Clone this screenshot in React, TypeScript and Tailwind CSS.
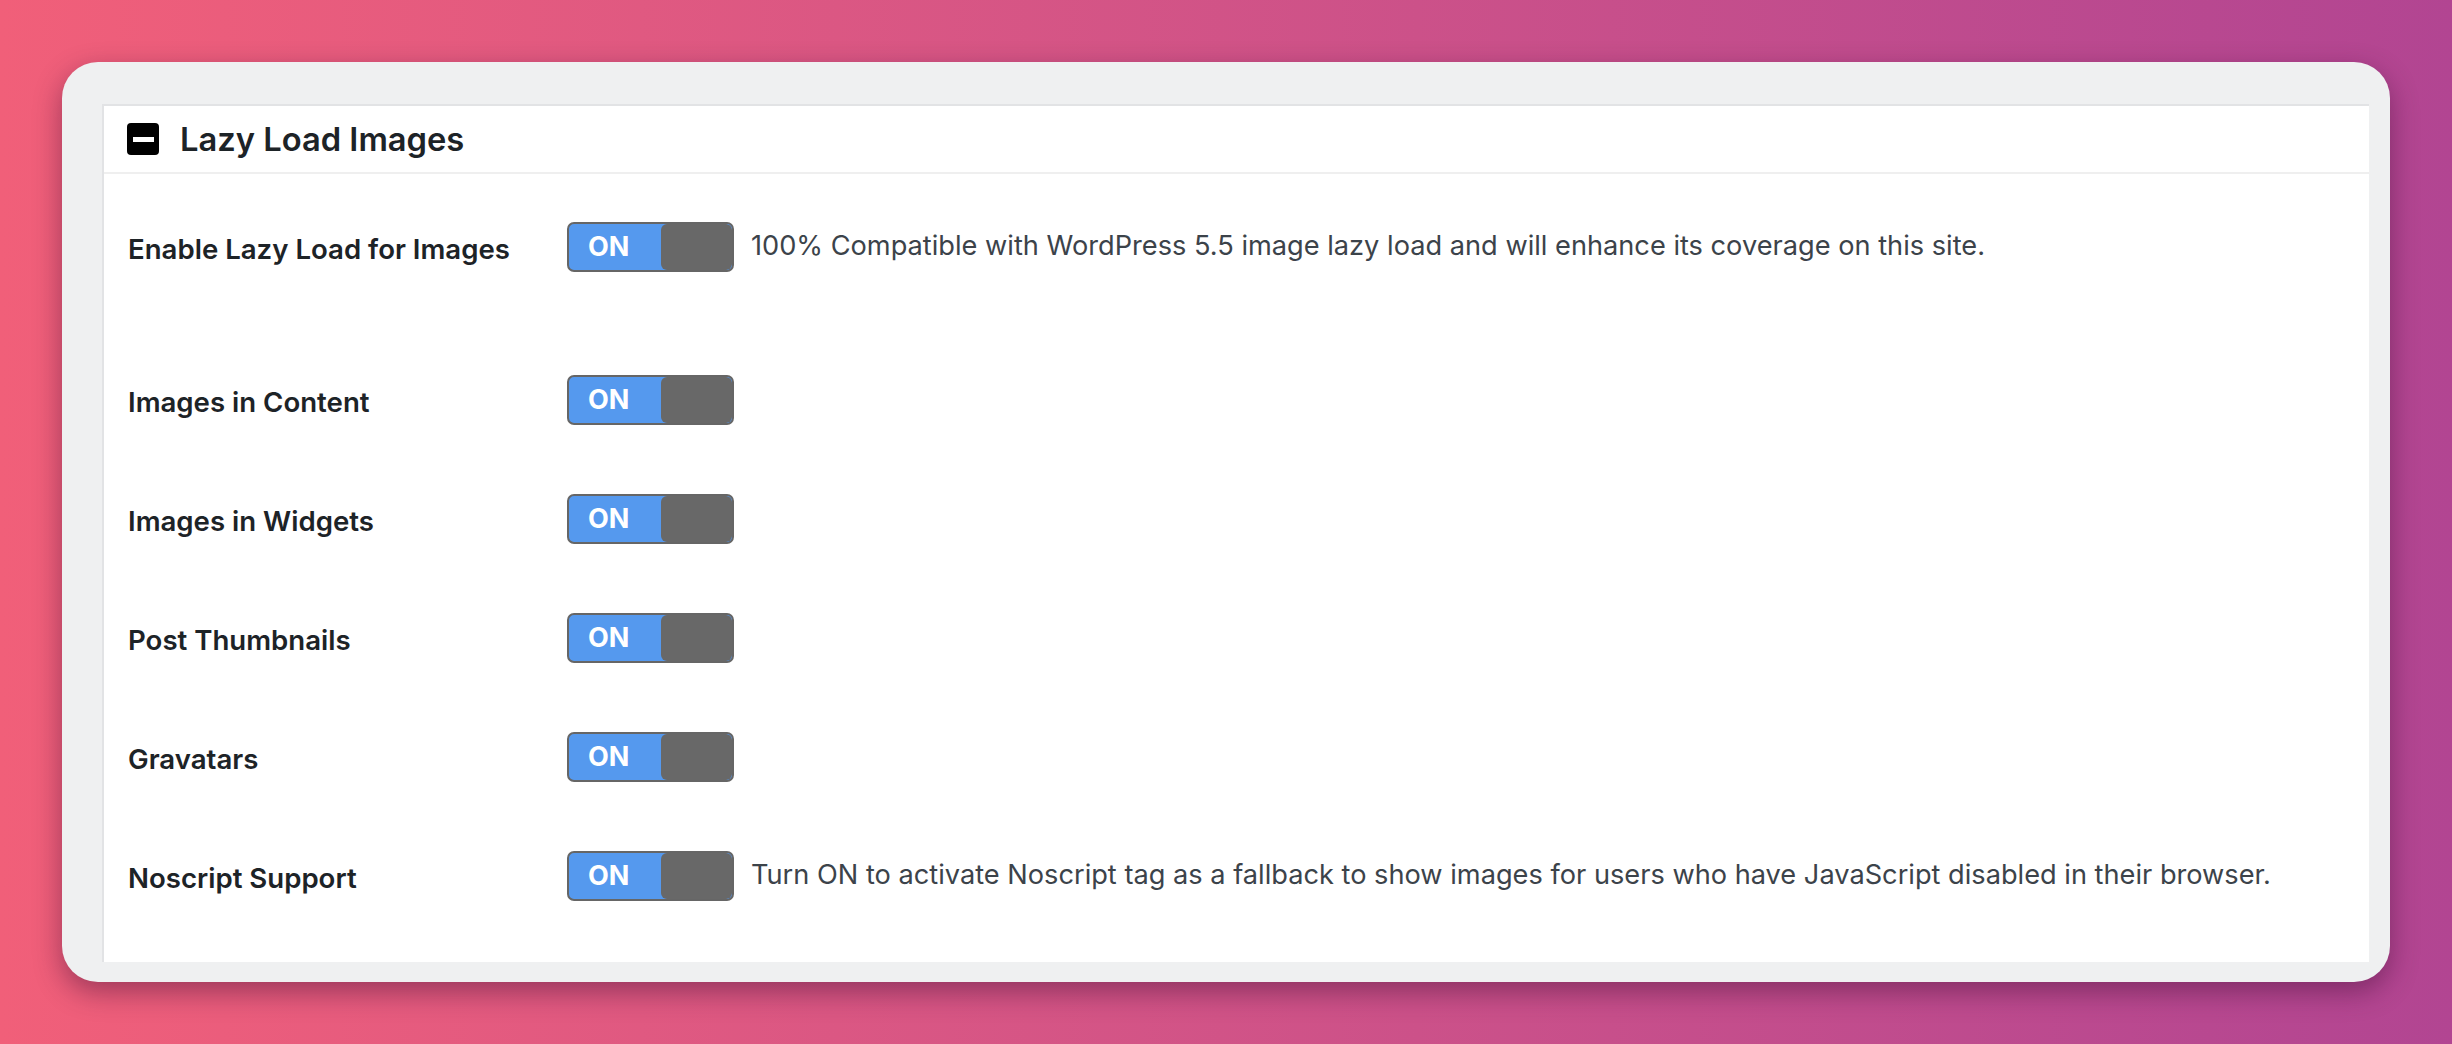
import React from 'react';

type Row = {
  label: string;
  note?: string;
  gapAfter?: boolean;
};

const rows: Row[] = [
  {
    label: 'Enable Lazy Load for Images',
    note: '100% Compatible with WordPress 5.5 image lazy load and will enhance its coverage on this site.',
    gapAfter: true,
  },
  { label: 'Images in Content' },
  { label: 'Images in Widgets' },
  { label: 'Post Thumbnails' },
  { label: 'Gravatars' },
  {
    label: 'Noscript Support',
    note: 'Turn ON to activate Noscript tag as a fallback to show images for users who have JavaScript disabled in their browser.',
  },
];

const Toggle = () => (
  <div className="flex h-[50px] w-[167px] shrink-0 overflow-hidden rounded-[7px] border-2 border-[#666666] bg-[#5599ee]">
    <div className="flex flex-1 items-center pl-[19px] text-[27px] font-bold leading-none text-white">ON</div>
    <div className="h-full w-[71px] rounded-[6px] bg-[#686868]" />
  </div>
);

const App = () => {
  return (
    <div
      className="h-[1044px] w-[2452px] overflow-hidden bg-gradient-to-r from-[#f15f79] to-[#b24592] pl-[62px] pt-[62px]"
      style={{ fontFamily: 'Inter, "Noto Sans", sans-serif' }}
    >
      <div className="h-[920px] w-[2328px] rounded-[36px] bg-[#eff0f1] pb-[20px] pl-[40px] pr-[21px] pt-[42px] shadow-[0_10px_28px_rgba(60,10,50,0.45)]">
        <div className="h-full border-l-2 border-t-2 border-[#e2e3e5] bg-white">
          <div className="flex h-[68px] items-center gap-[21px] border-b-2 border-[#efefef] pl-[23px]">
            <div className="flex h-[32px] w-[32px] items-center justify-center rounded-[4px] bg-black">
              <div className="h-[5px] w-[21px] bg-white" />
            </div>
            <h2 className="text-[32.7px] font-semibold leading-none text-[#1d2327]">Lazy Load Images</h2>
          </div>

          <div className="pl-[24px] pt-[13px]">
            {rows.map((row) => (
              <div key={row.label} className={row.gapAfter ? 'pb-[34px]' : ''}>
                <div className="flex h-[119px] items-center">
                  <div className="w-[439px] shrink-0 pt-[7px] text-[27.6px] font-semibold text-[#1d2327]">
                    {row.label}
                  </div>
                  <Toggle />
                  {row.note && (
                    <p className="ml-[17px] text-[27.2px] text-[#3c434a]">{row.note}</p>
                  )}
                </div>
              </div>
            ))}
          </div>
        </div>
      </div>
    </div>
  );
};

export default App;
